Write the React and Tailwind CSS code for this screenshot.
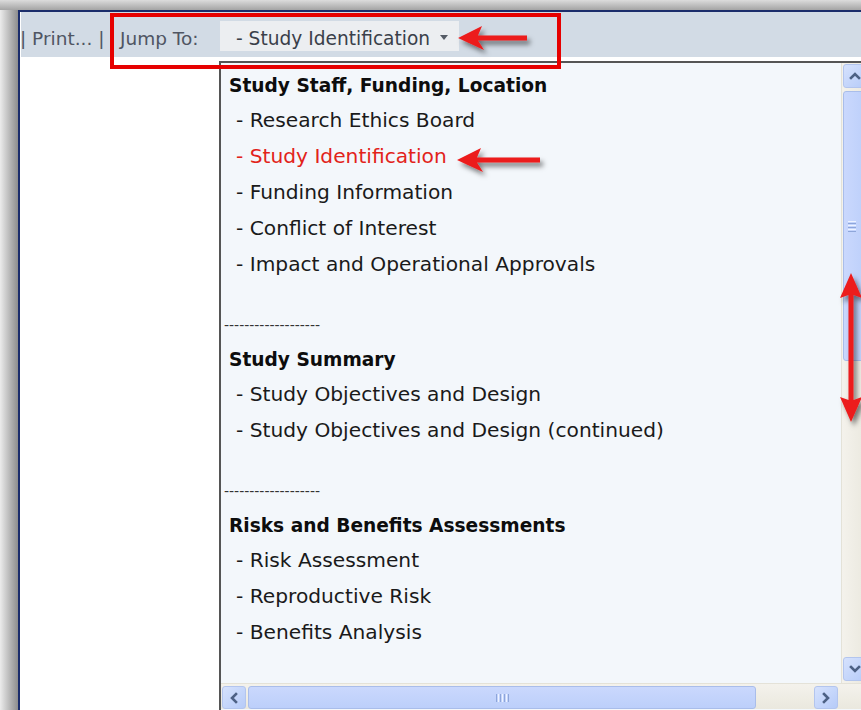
import React from "react";

const groups = [
  {
    title: "Study Staff, Funding, Location",
    items: [
      "Research Ethics Board",
      "Study Identification",
      "Funding Information",
      "Conflict of Interest",
      "Impact and Operational Approvals",
    ],
  },
  {
    title: "Study Summary",
    items: ["Study Objectives and Design", "Study Objectives and Design (continued)"],
  },
  {
    title: "Risks and Benefits Assessments",
    items: ["Risk Assessment", "Reproductive Risk", "Benefits Analysis"],
  },
];

const selected = "Study Identification";

function Chevron({ dir }) {
  const paths = {
    up: "M3 9 L7 5 L11 9",
    down: "M3 5 L7 9 L11 5",
    left: "M9 3 L5 7 L9 11",
    right: "M5 3 L9 7 L5 11",
  };
  return (
    <svg width="14" height="14" viewBox="0 0 14 14">
      <path d={paths[dir]} fill="none" stroke="#4d6185" strokeWidth="2.6" strokeLinecap="square" />
    </svg>
  );
}

function ScrollButton({ dir, className = "" }) {
  return (
    <div
      className={`flex items-center justify-center rounded-[3px] border border-[#b3c5ee] bg-gradient-to-br from-[#d6e2fd] to-[#b6cbf8] ${className}`}
    >
      <Chevron dir={dir} />
    </div>
  );
}

export default function App() {
  return (
    <div
      className="relative w-[861px] h-[710px] overflow-hidden bg-white text-[#1a1a1a]"
      style={{ fontFamily: '"DejaVu Sans", Verdana, sans-serif' }}
    >
      {/* outer shadow, top */}
      <div className="h-[10px] bg-gradient-to-b from-[#dcdcdc] to-[#a4a4a4]" />
      <div className="flex h-[700px]">
        {/* outer shadow, left */}
        <div className="w-[18px] shrink-0 bg-gradient-to-r from-[#ececec] to-[#8e8e8e]" />
        {/* window frame */}
        <div className="flex flex-col w-[870px] shrink-0 border-l-2 border-t-2 border-[#1b2d6b] bg-white">
          {/* toolbar */}
          <div className="flex items-center h-[45px] ml-px bg-[#d2dbe5] text-[18.5px] text-[#4f5563] whitespace-nowrap">
            <span className="ml-[-1px] w-[100px] pt-[8px]">| Print... |</span>
            <span className="w-[100px] pt-[8px]">Jump To:</span>
            <div className="flex items-center mt-[3px] h-[30px] w-[239px] bg-[#eceef1] pl-[16px] text-[#3a3f4a] text-[18.6px]">
              <span className="pt-[5px]">- Study Identification</span>
              <svg className="ml-[10px] mt-[3px]" width="8" height="5" viewBox="0 0 8 5">
                <path d="M0 0 L8 0 L4 5 Z" fill="#555b66" />
              </svg>
            </div>
          </div>
          <div className="h-[4px]" />
          {/* body */}
          <div className="flex flex-1">
            <div className="w-[199px] shrink-0 bg-white" />
            {/* jump-to dropdown panel */}
            <div className="flex flex-col w-[650px] shrink-0 border-l-2 border-t-2 border-[#555555] bg-[#f3f7fb]">
              <div className="flex h-[620px]">
                <div className="w-[620px] shrink-0 pt-[5px] pl-[8px] overflow-hidden">
                  {groups.map((g, gi) => (
                    <div key={g.title}>
                      {gi > 0 && (
                        <div className="h-[58px] pt-[34px]">
                          <div className="ml-[-5px] h-[14px] leading-[14px] text-[14px] text-[#333]">
                            -------------------
                          </div>
                        </div>
                      )}
                      <div className="h-[36px] leading-[36px] text-[18.6px] font-bold text-[#0d0d0d]">
                        {g.title}
                      </div>
                      {g.items.map((it) => (
                        <div
                          key={it}
                          className={`h-[36px] leading-[33px] pl-[7px] text-[20.2px] whitespace-nowrap ${
                            it === selected ? "text-[#e2231a]" : "text-[#1a1a1a]"
                          }`}
                        >
                          - {it}
                        </div>
                      ))}
                    </div>
                  ))}
                </div>
                {/* vertical scrollbar */}
                <div className="flex flex-col w-[26px] shrink-0 border-l border-[#e4e2d8] bg-gradient-to-r from-[#f4f2ec] to-[#eae8de] pt-[1px] pl-px">
                  <ScrollButton dir="up" className="h-[24px] w-[24px]" />
                  <div className="mt-[3px] h-[270px] w-[24px] rounded-[3px] border border-[#a9bdea] bg-gradient-to-r from-[#cad8fd] to-[#bccffa] flex items-center pl-[4px]">
                    <div className="flex flex-col gap-[1px]">
                      <div className="h-px w-[8px] bg-[#eef3ff]" />
                      <div className="h-px w-[8px] bg-[#8ea6da]" />
                      <div className="h-px w-[8px] bg-[#eef3ff]" />
                      <div className="h-px w-[8px] bg-[#8ea6da]" />
                      <div className="h-px w-[8px] bg-[#eef3ff]" />
                      <div className="h-px w-[8px] bg-[#8ea6da]" />
                    </div>
                  </div>
                  <div className="flex-1" />
                  <ScrollButton dir="down" className="h-[24px] w-[24px] mb-[2px]" />
                </div>
              </div>
              {/* horizontal scrollbar */}
              <div className="flex h-[26px] border-t border-[#e4e2d8] bg-gradient-to-b from-[#f4f2ec] to-[#eae8de] pt-[2px] pl-[1px]">
                <ScrollButton dir="left" className="h-[23px] w-[24px]" />
                <div className="ml-[2px] h-[23px] w-[508px] rounded-[3px] border border-[#a9bdea] bg-gradient-to-b from-[#cad8fd] to-[#bccffa] flex items-center justify-center">
                  <div className="flex gap-[1px] mt-[1px]">
                    <div className="w-px h-[8px] bg-[#8ea6da]" />
                    <div className="w-px h-[8px] bg-[#eef3ff]" />
                    <div className="w-px h-[8px] bg-[#8ea6da]" />
                    <div className="w-px h-[8px] bg-[#eef3ff]" />
                    <div className="w-px h-[8px] bg-[#8ea6da]" />
                    <div className="w-px h-[8px] bg-[#eef3ff]" />
                    <div className="w-px h-[8px] bg-[#8ea6da]" />
                  </div>
                </div>
                <div className="w-[58px]" />
                <ScrollButton dir="right" className="h-[23px] w-[24px]" />
              </div>
            </div>
          </div>
        </div>
      </div>

      {/* callout: highlight box round the Jump To control */}
      <div className="absolute left-[110px] top-[13px] w-[451px] h-[56px] border-4 border-[#e60000] pointer-events-none" />

      {/* callout arrows */}
      <svg
        className="absolute inset-0 pointer-events-none"
        width="861"
        height="710"
        viewBox="0 0 861 710"
      >
        <defs>
          <filter id="arrowShadow" x="-20%" y="-20%" width="140%" height="160%">
            <feDropShadow dx="3" dy="4" stdDeviation="2.5" floodColor="#000" floodOpacity="0.5" />
          </filter>
        </defs>
        <g fill="#ec1c1c" filter="url(#arrowShadow)">
          <path d="M458 38 L482 26 L478 35.5 L527 35.5 L527 40.5 L478 40.5 L484 50 Z" />
          <path d="M457 160 L481 148 L477 157.5 L540 157.5 L540 162.5 L477 162.5 L483 172 Z" />
          <path d="M851 273 L862 298 L853.5 295 L853.5 400 L862 397 L851 422 L840 397 L848.5 400 L848.5 295 L840 298 Z" />
        </g>
      </svg>
    </div>
  );
}
